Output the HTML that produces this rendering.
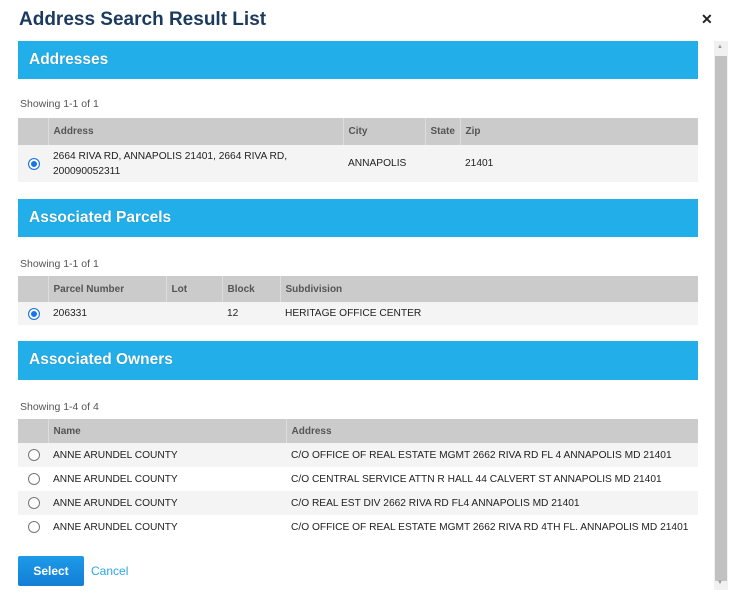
<!DOCTYPE html>
<html><head><meta charset="utf-8"><style>
*{margin:0;padding:0;box-sizing:border-box}
body{width:748px;height:610px;background:#fff;font-family:"Liberation Sans",Arial,sans-serif;position:relative;overflow:hidden;color:#222}
.abs{position:absolute}
h1{position:absolute;left:19px;top:9px;font-size:19px;font-weight:bold;color:#1b3a5e}
.x{position:absolute;left:701px;top:11px;font-size:14px;font-weight:bold;color:#222}
.bar{position:absolute;left:18px;width:680px;height:38px;background:#21aee9;color:#fff;font-weight:bold;font-size:15.5px;padding:10px 0 0 11px;text-shadow:0 0 1px rgba(0,0,0,.3)}
.show{position:absolute;left:20px;font-size:10.5px;color:#555}
table{position:absolute;left:18px;width:680px;border-collapse:collapse;font-size:10.2px;table-layout:fixed}
th{background:#cbcbcb;color:#555;font-weight:bold;text-align:left;padding-left:5px;border-left:1px solid #ddd;font-size:10px}
th:first-child{border-left:none}
td{padding-left:5px;color:#222}
tr.g td{background:#f4f4f4}
.r{width:12px;height:12px;border:1px solid #777;border-radius:50%;display:inline-block;margin-left:10px;vertical-align:middle;background:#fff}
.r.on{border:1px solid #1a73e8;box-shadow:inset 0 0 0 2px #fff;background:#1a73e8}
.sb{position:absolute;left:714px;top:41px;width:14px;height:549px;background:#f1f1f1}
.thumb{position:absolute;left:715px;top:56px;width:12px;height:525px;background:#c1c1c1}
.btn{position:absolute;left:18px;top:556px;width:66px;height:30px;background:linear-gradient(#1d9ae8,#137fd6);color:#fff;font-weight:bold;font-size:12px;text-align:center;line-height:30px;border-radius:2px}
.cancel{position:absolute;left:91px;top:564px;font-size:12px;color:#2aa8e8}
</style></head><body>
<h1>Address Search Result List</h1>
<div class="x">✕</div>
<div class="sb"></div><div class="thumb"></div>
<div class="abs" style="left:717px;top:44px;font-size:6px;color:#999">▲</div>
<div class="abs" style="left:717px;top:580px;font-size:6px;color:#999">▼</div>

<div class="bar" style="top:41px">Addresses</div>
<div class="show" style="top:98px">Showing 1-1 of 1</div>
<table style="top:118px">
<colgroup><col style="width:30px"><col style="width:295px"><col style="width:82px"><col style="width:35px"><col></colgroup>
<tr style="height:27px"><th></th><th>Address</th><th>City</th><th>State</th><th>Zip</th></tr>
<tr class="g" style="height:37px"><td style="padding:0"><span class="r on"></span></td><td style="line-height:15px">2664 RIVA RD, ANNAPOLIS 21401, 2664 RIVA RD,<br>200090052311</td><td>ANNAPOLIS</td><td></td><td>21401</td></tr>
</table>

<div class="bar" style="top:199px">Associated Parcels</div>
<div class="show" style="top:258px">Showing 1-1 of 1</div>
<table style="top:276px">
<colgroup><col style="width:30px"><col style="width:118px"><col style="width:56px"><col style="width:58px"><col></colgroup>
<tr style="height:26px"><th></th><th>Parcel Number</th><th>Lot</th><th>Block</th><th>Subdivision</th></tr>
<tr class="g" style="height:23px"><td style="padding:0"><span class="r on"></span></td><td>206331</td><td></td><td>12</td><td>HERITAGE OFFICE CENTER</td></tr>
</table>

<div class="bar" style="top:341px;height:39px">Associated Owners</div>
<div class="show" style="top:401px">Showing 1-4 of 4</div>
<table style="top:419px">
<colgroup><col style="width:30px"><col style="width:238px"><col></colgroup>
<tr style="height:24px"><th></th><th>Name</th><th>Address</th></tr>
<tr class="g" style="height:24px"><td style="padding:0"><span class="r"></span></td><td>ANNE ARUNDEL COUNTY</td><td>C/O OFFICE OF REAL ESTATE MGMT 2662 RIVA RD FL 4 ANNAPOLIS MD 21401</td></tr>
<tr style="height:24px"><td style="padding:0"><span class="r"></span></td><td>ANNE ARUNDEL COUNTY</td><td>C/O CENTRAL SERVICE ATTN R HALL 44 CALVERT ST ANNAPOLIS MD 21401</td></tr>
<tr class="g" style="height:24px"><td style="padding:0"><span class="r"></span></td><td>ANNE ARUNDEL COUNTY</td><td>C/O REAL EST DIV 2662 RIVA RD FL4 ANNAPOLIS MD 21401</td></tr>
<tr style="height:24px"><td style="padding:0"><span class="r"></span></td><td>ANNE ARUNDEL COUNTY</td><td>C/O OFFICE OF REAL ESTATE MGMT 2662 RIVA RD 4TH FL. ANNAPOLIS MD 21401</td></tr>
</table>

<div class="btn">Select</div>
<div class="cancel">Cancel</div>
</body></html>
